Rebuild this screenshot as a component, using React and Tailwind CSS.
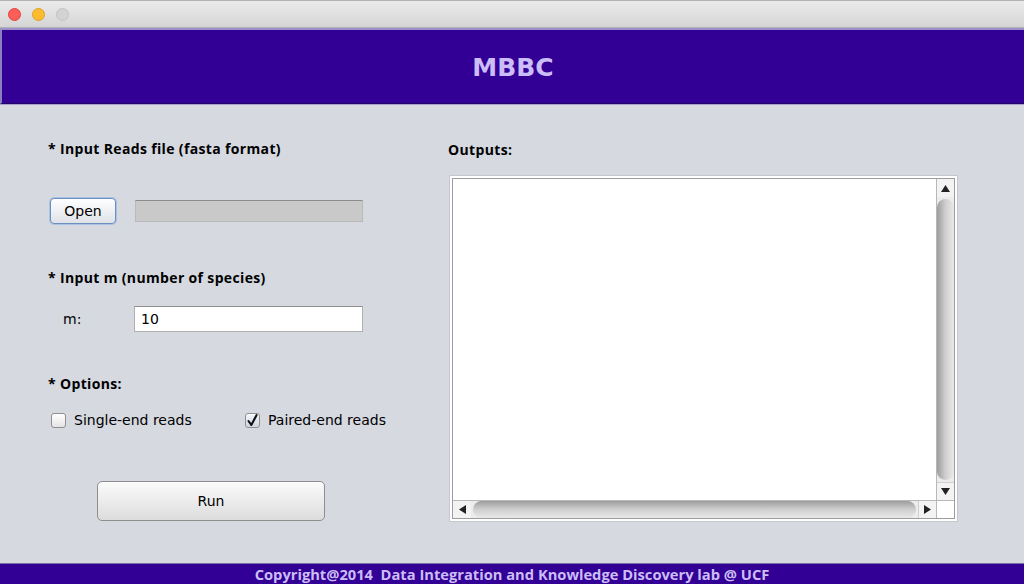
import React from "react";

const sans = { fontFamily: '"DejaVu Sans", "Liberation Sans", sans-serif' };
const bold = { fontFamily: '"Open Sans", "DejaVu Sans", sans-serif' };

function TrafficLights() {
  return (
    <div className="flex items-center gap-[11px] pl-[8px]">
      <span className="w-[13px] h-[13px] rounded-full bg-[#fc5f57] border border-[#e0443e]" />
      <span className="w-[13px] h-[13px] rounded-full bg-[#fdbb2e] border border-[#dea123]" />
      <span className="w-[13px] h-[13px] rounded-full bg-[#d3d3d3] border border-[#c2c2c2]" />
    </div>
  );
}

function Label({ children, className = "" }) {
  return (
    <div
      className={"h-[20px] flex items-center text-[14px] tracking-[0.35px] font-bold text-black " + className}
      style={bold}
    >
      {children}
    </div>
  );
}

function Checkbox({ checked }) {
  return (
    <span
      className={
        "w-[15px] h-[15px] rounded-[3px] border border-[#8f8f8f] shadow-[inset_0_1px_0_#fff] flex items-center justify-center " +
        (checked ? "bg-gradient-to-b from-[#f4f6fa] to-[#cfd6e2]" : "bg-gradient-to-b from-white to-[#e4e4e4]")
      }
    >
      {checked && (
        <svg width="13" height="13" viewBox="0 0 13 13">
          <path d="M2.5 7 L5.3 11 L10.5 1.2" fill="none" stroke="#111" strokeWidth="2.1" strokeLinecap="round" strokeLinejoin="round" />
        </svg>
      )}
    </span>
  );
}

function Tri({ dir }) {
  const pts = {
    up: "0,7 4.5,0 9,7",
    down: "0,0 9,0 4.5,7",
    left: "7,0 7,9 0,4.5",
    right: "0,0 0,9 7,4.5",
  }[dir];
  const w = dir === "up" || dir === "down" ? 9 : 7;
  const h = dir === "up" || dir === "down" ? 7 : 9;
  return (
    <svg width={w} height={h} viewBox={`0 0 ${w} ${h}`}>
      <polygon points={pts} fill="#222" />
    </svg>
  );
}

function OutputBox() {
  return (
    <div className="w-[509px] h-[347px] border border-[#c4c7cd] bg-white p-[2px]">
      <div className="w-full h-full border border-[#9c9c9c] flex flex-col">
        <div className="flex-1 flex min-h-0">
          <div className="flex-1 bg-white" />
          {/* vertical scrollbar */}
          <div className="w-[18px] border-l border-[#b8b8b8] bg-[#ececec] flex flex-col">
            <div className="h-[18px] flex items-center justify-center bg-[#f3f3f3]">
              <Tri dir="up" />
            </div>
            <div className="flex-1 rounded-t-[10px] rounded-b-[10px] bg-gradient-to-r from-[#9d9d9d] via-[#cfcfcf] to-[#e9e9e9] my-[2px]" />
            <div className="h-[18px] flex items-center justify-center bg-[#f3f3f3] border-t border-[#d0d0d0]">
              <Tri dir="down" />
            </div>
          </div>
        </div>
        <div className="h-[18px] flex border-t border-[#b8b8b8]">
          {/* horizontal scrollbar */}
          <div className="flex-1 flex bg-[#ececec]">
            <div className="w-[18px] flex items-center justify-center bg-[#f3f3f3]">
              <Tri dir="left" />
            </div>
            <div className="flex-1 rounded-l-[10px] rounded-r-[10px] bg-gradient-to-b from-[#9d9d9d] via-[#cfcfcf] to-[#e9e9e9] mx-[2px]" />
            <div className="w-[18px] flex items-center justify-center bg-[#f3f3f3] border-l border-[#d0d0d0]">
              <Tri dir="right" />
            </div>
          </div>
          <div className="w-[18px] border-l border-[#b8b8b8] bg-white" />
        </div>
      </div>
    </div>
  );
}

export default function App() {
  return (
    <div className="w-[1024px] h-[584px] flex flex-col overflow-hidden bg-[#d6d9e0]">
      {/* window title bar */}
      <div className="h-[28px] border-t border-[#3a3a3a] bg-gradient-to-b from-[#ebebeb] to-[#d5d5d5] border-b border-[#b3b3b3] flex items-center">
        <TrafficLights />
      </div>
      <div className="h-[2px] bg-[#9d8fc9]" />

      {/* header banner */}
      <div className="h-[74px] bg-[#330095] border-l-2 border-[#8a7fbf] border-b border-b-[#1e0066] flex items-center justify-center pt-[3px]">
        <span className="text-[25px] font-bold text-[#cbbdf5]" style={sans}>
          MBBC
        </span>
      </div>
      <div className="h-[1px] bg-[#a99fcf]" />

      {/* main form */}
      <div className="flex-1 flex">
        <div className="w-[448px] flex flex-col pl-[48px]">
          <Label className="mt-[33px]">* Input Reads file (fasta format)</Label>

          <div className="mt-[40px] flex items-center">
            <button
              className="ml-[2px] w-[66px] h-[26px] rounded-[4px] border border-[#6c8fbf] bg-gradient-to-b from-white to-[#dfe2e7] shadow-[0_0_0_1px_#a9c3e6] text-[14px] text-black"
              style={sans}
            >
              Open
            </button>
            <div className="ml-[19px] w-[228px] h-[22px] bg-[#c9c9c9] border border-[#b9b9b9] border-t-[#8d8d8d]" />
          </div>

          <Label className="mt-[43px]">* Input m (number of species)</Label>

          <div className="mt-[19px] flex items-center">
            <span className="ml-[15px] w-[71px] text-[14px] text-black" style={sans}>
              m:
            </span>
            <div className="w-[229px] h-[26px] bg-white border border-[#b0b0b0] border-t-[#8e8e8e] flex items-center pl-[6px] text-[14px] text-black" style={sans}>
              10
            </div>
          </div>

          <Label className="mt-[41px]">* Options:</Label>

          <div className="mt-[18px] h-[18px] flex items-center text-[14px] text-black" style={sans}>
            <div className="ml-[3px] flex items-center gap-[8px] w-[194px]">
              <Checkbox checked={false} />
              <span>Single-end reads</span>
            </div>
            <div className="flex items-center gap-[8px]">
              <Checkbox checked />
              <span>Paired-end reads</span>
            </div>
          </div>

          <button
            className="mt-[52px] ml-[49px] w-[228px] h-[40px] rounded-[5px] border border-[#8e8e8e] bg-gradient-to-b from-[#fbfbfb] via-[#ececec] to-[#dcdcdc] text-[14px] text-black"
            style={sans}
          >
            Run
          </button>
        </div>

        <div className="flex-1 flex flex-col">
          <Label className="mt-[34px]">Outputs:</Label>
          <div className="mt-[16px] ml-[1px]">
            <OutputBox />
          </div>
        </div>
      </div>

      {/* footer banner */}
      <div className="h-[21px] bg-[#330095] border-t border-[#7a70a8] flex items-center justify-center">
        <span className="text-[14.7px] font-bold text-[#cbbdf5] whitespace-pre" style={bold}>
          Copyright@2014  Data Integration and Knowledge Discovery lab @ UCF
        </span>
      </div>
    </div>
  );
}
